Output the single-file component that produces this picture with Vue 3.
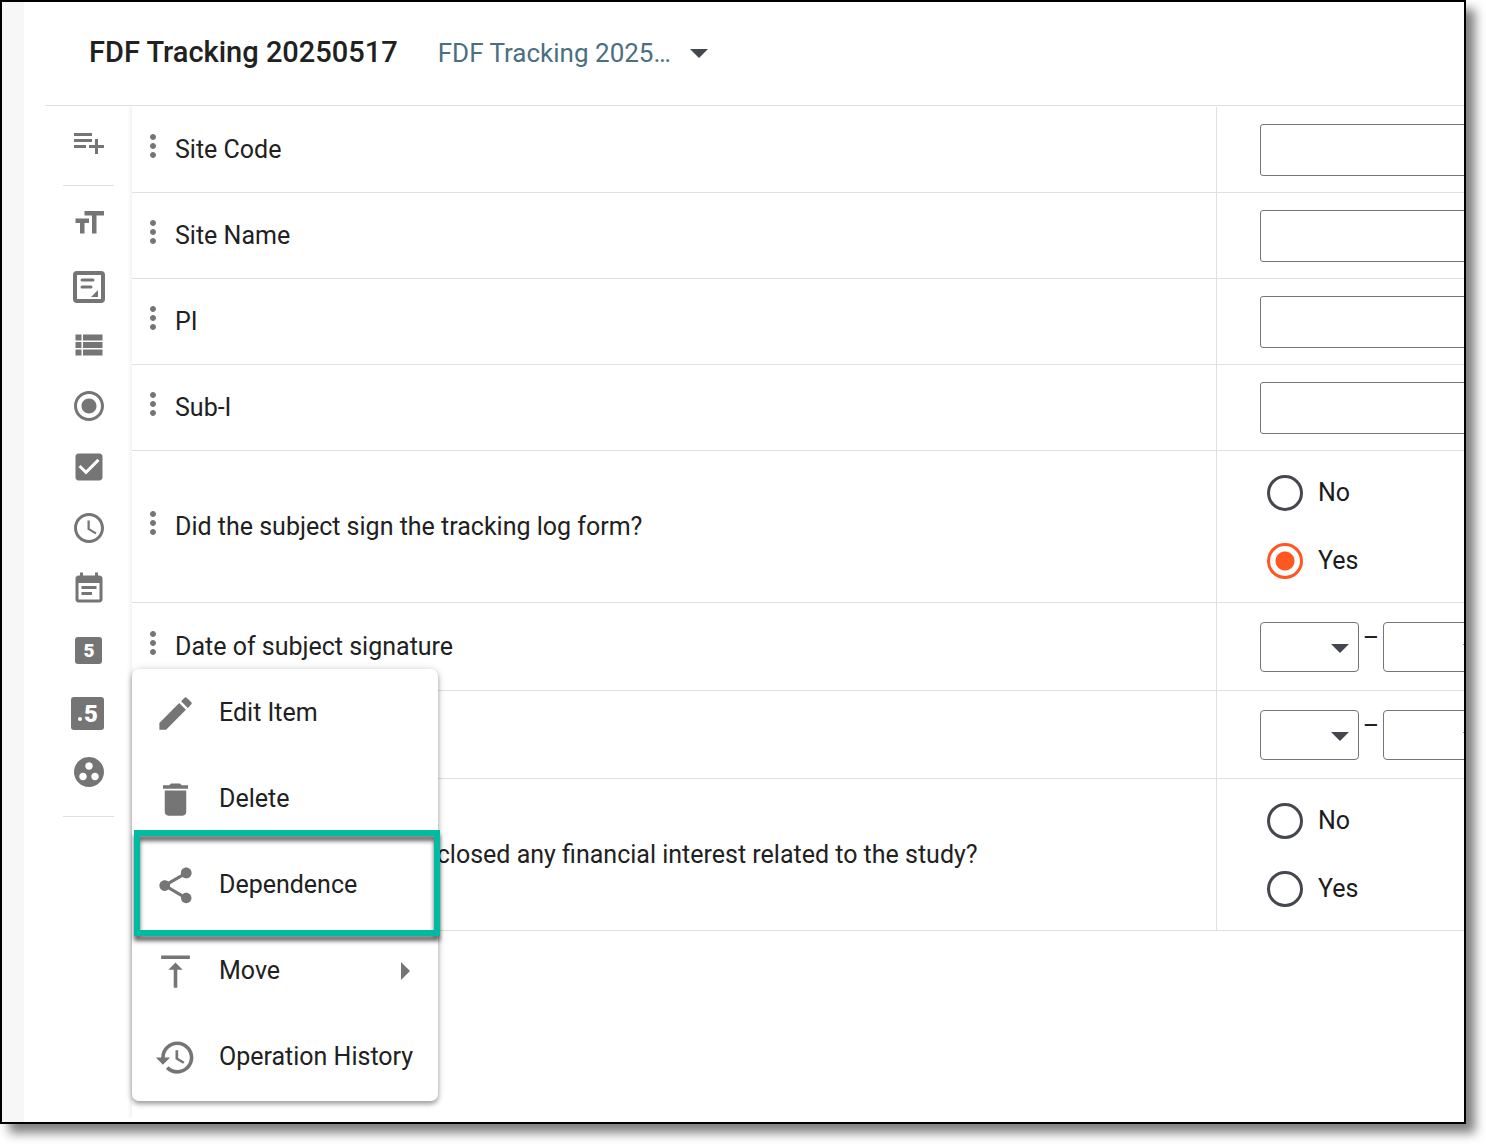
<script setup>
import { ref } from 'vue'

const form = ref('current')

const tools = [
  { name: 'Short text', path: 'M9 4v3h5v12h3V7h5V4H9zm-6 8h3v7h3v-7h3V9H3v3z' },
  { name: 'Paragraph', shape: 'paragraph' },
  { name: 'List', path: 'M3 14h4v-4H3v4zm0 5h4v-4H3v4zM3 9h4V5H3v4zm5 5h13v-4H8v4zm0 5h13v-4H8v4zM8 5v4h13V5H8z' },
  { name: 'Radio', path: 'M12 7c-2.76 0-5 2.24-5 5s2.24 5 5 5 5-2.24 5-5-2.24-5-5-5zm0-5C6.48 2 2 6.48 2 12s4.48 10 10 10 10-4.48 10-10S17.52 2 12 2zm0 18c-4.42 0-8-3.58-8-8s3.58-8 8-8 8 3.58 8 8-3.58 8-8 8z' },
  { name: 'Checkbox', path: 'M19 3H5c-1.11 0-2 .9-2 2v14c0 1.1.89 2 2 2h14c1.11 0 2-.9 2-2V5c0-1.1-.89-2-2-2zm-9 14l-5-5 1.41-1.41L10 14.17l7.59-7.59L19 8l-9 9z' },
  { name: 'Time', path: 'M11.99 2C6.47 2 2 6.48 2 12s4.47 10 9.99 10C17.52 22 22 17.52 22 12S17.52 2 11.99 2zM12 20c-4.42 0-8-3.58-8-8s3.58-8 8-8 8 3.58 8 8-3.58 8-8 8zm.5-13H11v6l5.25 3.15.75-1.23-4.5-2.67V7z' },
  { name: 'Date', path: 'M17 10H7v2h10v-2zm2-7h-1V1h-2v2H8V1H6v2H5c-1.11 0-1.99.9-1.99 2L3 19c0 1.1.89 2 2 2h14c1.1 0 2-.9 2-2V5c0-1.1-.9-2-2-2zm0 16H5V8h14v11zm-5-5H7v2h7v-2z' },
  { name: 'Integer', shape: 'integer' },
  { name: 'Decimal', shape: 'decimal' },
  { name: 'Group', path: 'M12 2C6.48 2 2 6.48 2 12s4.48 10 10 10 10-4.48 10-10S17.52 2 12 2zM8 17.5c-1.38 0-2.5-1.12-2.5-2.5s1.12-2.5 2.5-2.5 2.5 1.12 2.5 2.5-1.12 2.5-2.5 2.5zM9.5 8c0-1.38 1.12-2.5 2.5-2.5s2.5 1.12 2.5 2.5-1.12 2.5-2.5 2.5S9.5 9.38 9.5 8zm6.5 9.5c-1.38 0-2.5-1.12-2.5-2.5s1.12-2.5 2.5-2.5 2.5 1.12 2.5 2.5-1.12 2.5-2.5 2.5z' }
]

const items = ref([
  { id: 'code', label: 'Site Code', type: 'text', value: '' },
  { id: 'name', label: 'Site Name', type: 'text', value: '' },
  { id: 'pi', label: 'PI', type: 'text', value: '' },
  { id: 'subi', label: 'Sub-I', type: 'text', value: '' },
  { id: 'signed', label: 'Did the subject sign the tracking log form?', type: 'radio', value: 'Yes' },
  { id: 'signdate', label: 'Date of subject signature', type: 'date', menu: true },
  { id: 'date2', label: '', type: 'date' },
  { id: 'interest', label: 'Has the investigator disclosed any financial interest related to the study?', type: 'radio', value: '' }
])

const menu = [
  { name: 'Edit Item', path: 'M3 17.25V21h3.75L17.81 9.94l-3.75-3.75L3 17.25zM20.71 7.04c.39-.39.39-1.02 0-1.41l-2.34-2.34c-.39-.39-1.02-.39-1.41 0l-1.83 1.83 3.75 3.75 1.83-1.83z' },
  { name: 'Delete', path: 'M6 19c0 1.1.9 2 2 2h8c1.1 0 2-.9 2-2V7H6v12zM19 4h-3.5l-1-1h-5l-1 1H5v2h14V4z' },
  { name: 'Dependence', marked: true, path: 'M18 16.08c-.76 0-1.44.3-1.96.77L8.91 12.7c.05-.23.09-.46.09-.7s-.04-.47-.09-.7l7.05-4.11c.54.5 1.25.81 2.04.81 1.66 0 3-1.34 3-3s-1.34-3-3-3-3 1.34-3 3c0 .24.04.47.09.7L8.04 9.81C7.5 9.31 6.79 9 6 9c-1.66 0-3 1.34-3 3s1.34 3 3 3c.79 0 1.5-.31 2.04-.81l7.12 4.16c-.05.21-.08.43-.08.65 0 1.61 1.31 2.92 2.92 2.92s2.92-1.31 2.92-2.92-1.31-2.92-2.92-2.92z' },
  { name: 'Move', submenu: true, path: 'M8 11h3v10h2V11h3l-4-4-4 4zM4 3v2h16V3H4z' },
  { name: 'Operation History', path: 'M13 3c-4.97 0-9 4.03-9 9H1l3.89 3.89.07.14L9 12H6c0-3.87 3.13-7 7-7s7 3.13 7 7-3.13 7-7 7c-1.93 0-3.68-.79-4.94-2.06l-1.42 1.42C8.27 19.99 10.51 21 13 21c4.97 0 9-4.03 9-9s-4.03-9-9-9zm-1 5v5l4.28 2.54.72-1.21-3.5-2.08V8H12z' }
]
</script>

<template>
  <div class="window">
    <div class="strip"></div>
    <div class="page">
      <header class="header">
        <h1>FDF Tracking 20250517</h1>
        <div class="select-wrap">
          <select v-model="form" class="form-select" aria-label="Form version">
            <option value="current">FDF Tracking 2025…</option>
          </select>
          <svg class="caret" viewBox="0 0 18 9"><path d="M0 0h18l-9 9z" /></svg>
        </div>
      </header>

      <div class="body">
        <aside class="toolbar">
          <button type="button" class="tool first" aria-label="Add item">
            <svg class="icon" viewBox="0 0 24 24"><path d="M14 10H2v2h12v-2zm0-4H2v2h12V6zm4 8v-4h-2v4h-4v2h4v4h2v-4h4v-2h-4zM2 16h8v-2H2v2z" /></svg>
          </button>
          <div class="tools">
            <button v-for="tool in tools" :key="tool.name" type="button" class="tool" :aria-label="tool.name">
              <svg v-if="tool.path" class="icon" viewBox="0 0 24 24"><path :d="tool.path" /></svg>
              <svg v-else-if="tool.shape === 'paragraph'" class="icon" viewBox="0 0 36 36">
                <rect x="4" y="7" width="28" height="28" rx="2" fill="none" stroke="#757575" stroke-width="4" />
                <path d="M11 14h11M11 21h9" stroke="#757575" stroke-width="3" stroke-linecap="round" />
                <path d="M27 24v7h-7z" />
              </svg>
              <svg v-else-if="tool.shape === 'integer'" class="icon" viewBox="0 0 36 36">
                <rect x="4" y="5" width="27" height="27" rx="3" />
                <text x="18" y="25" text-anchor="middle" class="digit">5</text>
              </svg>
              <svg v-else class="icon" viewBox="0 0 36 36">
                <rect x="0" y="4" width="33" height="33" rx="3" />
                <circle cx="9" cy="26" r="2" fill="#fff" />
                <text x="20" y="29" text-anchor="middle" class="digit large">5</text>
              </svg>
            </button>
          </div>
        </aside>

        <main class="items">
          <div v-for="item in items" :key="item.id" :class="['row', item.type]">
            <div class="label-cell">
              <button type="button" class="more" aria-label="Item menu">
                <svg class="icon" viewBox="0 0 24 24"><path d="M12 8c1.1 0 2-.9 2-2s-.9-2-2-2-2 .9-2 2 .9 2 2 2zm0 2c-1.1 0-2 .9-2 2s.9 2 2 2 2-.9 2-2-.9-2-2-2zm0 6c-1.1 0-2 .9-2 2s.9 2 2 2 2-.9 2-2-.9-2-2-2z" /></svg>
              </button>
              <label v-if="item.type === 'text'" :for="item.id">{{ item.label }}</label>
              <span v-else :id="item.id + '-label'">{{ item.label }}</span>
            </div>

            <div class="control-cell">
              <input v-if="item.type === 'text'" :id="item.id" v-model="item.value" type="text" class="text-input" />
              <div v-else-if="item.type === 'radio'" class="options" role="radiogroup" :aria-labelledby="item.id + '-label'">
                <label v-for="option in ['No', 'Yes']" :key="option" class="option">
                  <input v-model="item.value" type="radio" :name="item.id" :value="option" />
                  {{ option }}
                </label>
              </div>
              <div v-else class="date-fields">
                <div class="select-wrap">
                  <select class="date-select" aria-label="Day"><option></option></select>
                  <svg class="caret" viewBox="0 0 18 9"><path d="M0 0h18l-9 9z" /></svg>
                </div>
                <span class="dash">–</span>
                <div class="select-wrap">
                  <select class="date-select month" aria-label="Month"><option></option></select>
                  <svg class="caret" viewBox="0 0 18 9"><path d="M0 0h18l-9 9z" /></svg>
                </div>
              </div>
            </div>

            <div v-if="item.menu" class="menu" role="menu">
              <button v-for="entry in menu" :key="entry.name" type="button" role="menuitem" :class="['menu-item', { marked: entry.marked }]">
                <svg class="menu-icon" viewBox="0 0 24 24"><path :d="entry.path" /></svg>
                <span>{{ entry.name }}</span>
                <svg v-if="entry.submenu" class="submenu" viewBox="0 0 9 18"><path d="M0 0v18l9-9z" /></svg>
              </button>
            </div>
          </div>
        </main>
      </div>
    </div>
  </div>
</template>

<style>
body {
  margin: 0;
  background: #fff;
}
</style>

<style scoped>
* {
  box-sizing: border-box;
}

.window {
  display: flex;
  min-height: calc(100vh - 20px);
  margin: 0 20px 20px 0;
  border: 2px solid #000;
  background: #fff;
  box-shadow: 9px 9px 10px rgba(0, 0, 0, 0.5);
  font-family: Roboto, "Liberation Sans", sans-serif;
  font-size: 25px;
  line-height: 32px;
  color: #212121;
}

.strip {
  width: 22px;
  background: #f7f7f7;
}

.page {
  flex: 1;
  min-width: 0;
  display: flex;
  flex-direction: column;
  padding: 0 0 3px 21px;
}

button {
  border: 0;
  padding: 0;
  background: none;
  font: inherit;
  color: inherit;
  cursor: pointer;
}

svg {
  display: block;
  flex: none;
  fill: #757575;
  overflow: visible;
}

.icon {
  width: 36px;
  height: 36px;
}

.header {
  display: flex;
  align-items: center;
  gap: 40px;
  height: 104px;
  padding: 0 44px 4px 44px;
  border-bottom: 1px solid #e0e0e0;
}

h1 {
  margin: 0;
  font-size: 29px;
  font-weight: 500;
}

.select-wrap {
  position: relative;
}

select {
  appearance: none;
  background: none;
  font: inherit;
  outline: none;
}

.form-select {
  width: 270px;
  height: 40px;
  padding: 2px 30px 0 0;
  border: 0;
  color: #4a6f82;
  font-size: 26px;
}

.caret {
  position: absolute;
  right: 10px;
  top: calc(50% - 3px);
  width: 18px;
  height: 9px;
  fill: #44474e;
  pointer-events: none;
}

.header .caret {
  right: 0;
}

.body {
  flex: 1;
  display: flex;
}

.toolbar {
  width: 87px;
  padding: 18px 18px 0;
}

.tool {
  display: flex;
  align-items: center;
  justify-content: center;
  width: 100%;
  height: 61px;
}

.tool.first {
  height: 36px;
}

.tools {
  margin-top: 25px;
  padding: 6px 0 14px;
  border-top: 1px solid #e0e0e0;
  border-bottom: 1px solid #e0e0e0;
}

.digit {
  fill: #fff;
  font-size: 19px;
  font-weight: 900;
}

.digit.large {
  font-size: 24px;
}

.items {
  flex: 1;
  min-width: 0;
  padding-top: 1px;
  background: #fff;
  box-shadow: -2px 0 4px rgba(0, 0, 0, 0.06);
  clip-path: inset(0 0 0 -8px);
}

.row {
  position: relative;
  display: flex;
  min-height: 86px;
  border-bottom: 1px solid #e0e0e0;
}

.row.date {
  min-height: 88px;
}

.row.radio {
  min-height: 152px;
}

.label-cell {
  flex: 1;
  display: flex;
  align-items: center;
  gap: 4px;
  padding-left: 3px;
}

.more {
  padding-bottom: 8px;
}

.control-cell {
  width: 248px;
  display: flex;
  align-items: center;
  padding-left: 43px;
  border-left: 1px solid #e0e0e0;
  overflow: hidden;
}

.text-input {
  flex: none;
  width: 480px;
  height: 52px;
  padding: 0 12px;
  border: 1px solid #757575;
  border-radius: 3px;
  font: inherit;
  outline: none;
}

.options {
  display: flex;
  flex-direction: column;
  gap: 32px;
  padding-left: 7px;
}

.option {
  display: flex;
  align-items: center;
  gap: 15px;
  height: 36px;
  color: #1a1b20;
}

.option input {
  appearance: none;
  width: 36px;
  height: 36px;
  margin: 0;
  border: 3px solid #44474e;
  border-radius: 50%;
}

.option input:checked {
  border-color: #ff5722;
  background: radial-gradient(circle, #ff5722 9px, transparent 10px);
}

.date-fields {
  display: flex;
}

.date-select {
  display: block;
  width: 99px;
  height: 50px;
  border: 1px solid #757575;
  border-radius: 4px;
}

.date-select.month {
  width: 108px;
}

.dash {
  width: 24px;
  text-align: center;
}

.menu {
  position: absolute;
  z-index: 2;
  top: 66px;
  left: 0;
  width: 306px;
  padding: 1px 0;
  border-radius: 7px;
  background: #fff;
  box-shadow: 0 3px 5px rgba(0, 0, 0, 0.35), 0 0 8px rgba(0, 0, 0, 0.12);
}

.menu-item {
  position: relative;
  display: flex;
  align-items: center;
  gap: 22px;
  width: 100%;
  height: 86px;
  padding: 0 28px 0 22px;
  white-space: nowrap;
}

.menu-item:last-child {
  padding-right: 0;
}

.menu-icon {
  width: 43px;
  height: 43px;
}

.submenu {
  width: 9px;
  height: 18px;
  margin-left: auto;
}

/* outline around the active entry, slightly larger than the row */
.menu-item.marked::after {
  content: '';
  position: absolute;
  z-index: 1;
  top: -12px;
  right: -2px;
  bottom: -8px;
  left: 2px;
  border: 6px solid #00baa2;
  filter: drop-shadow(0 5px 2px rgba(0, 0, 0, 0.6));
}
</style>
